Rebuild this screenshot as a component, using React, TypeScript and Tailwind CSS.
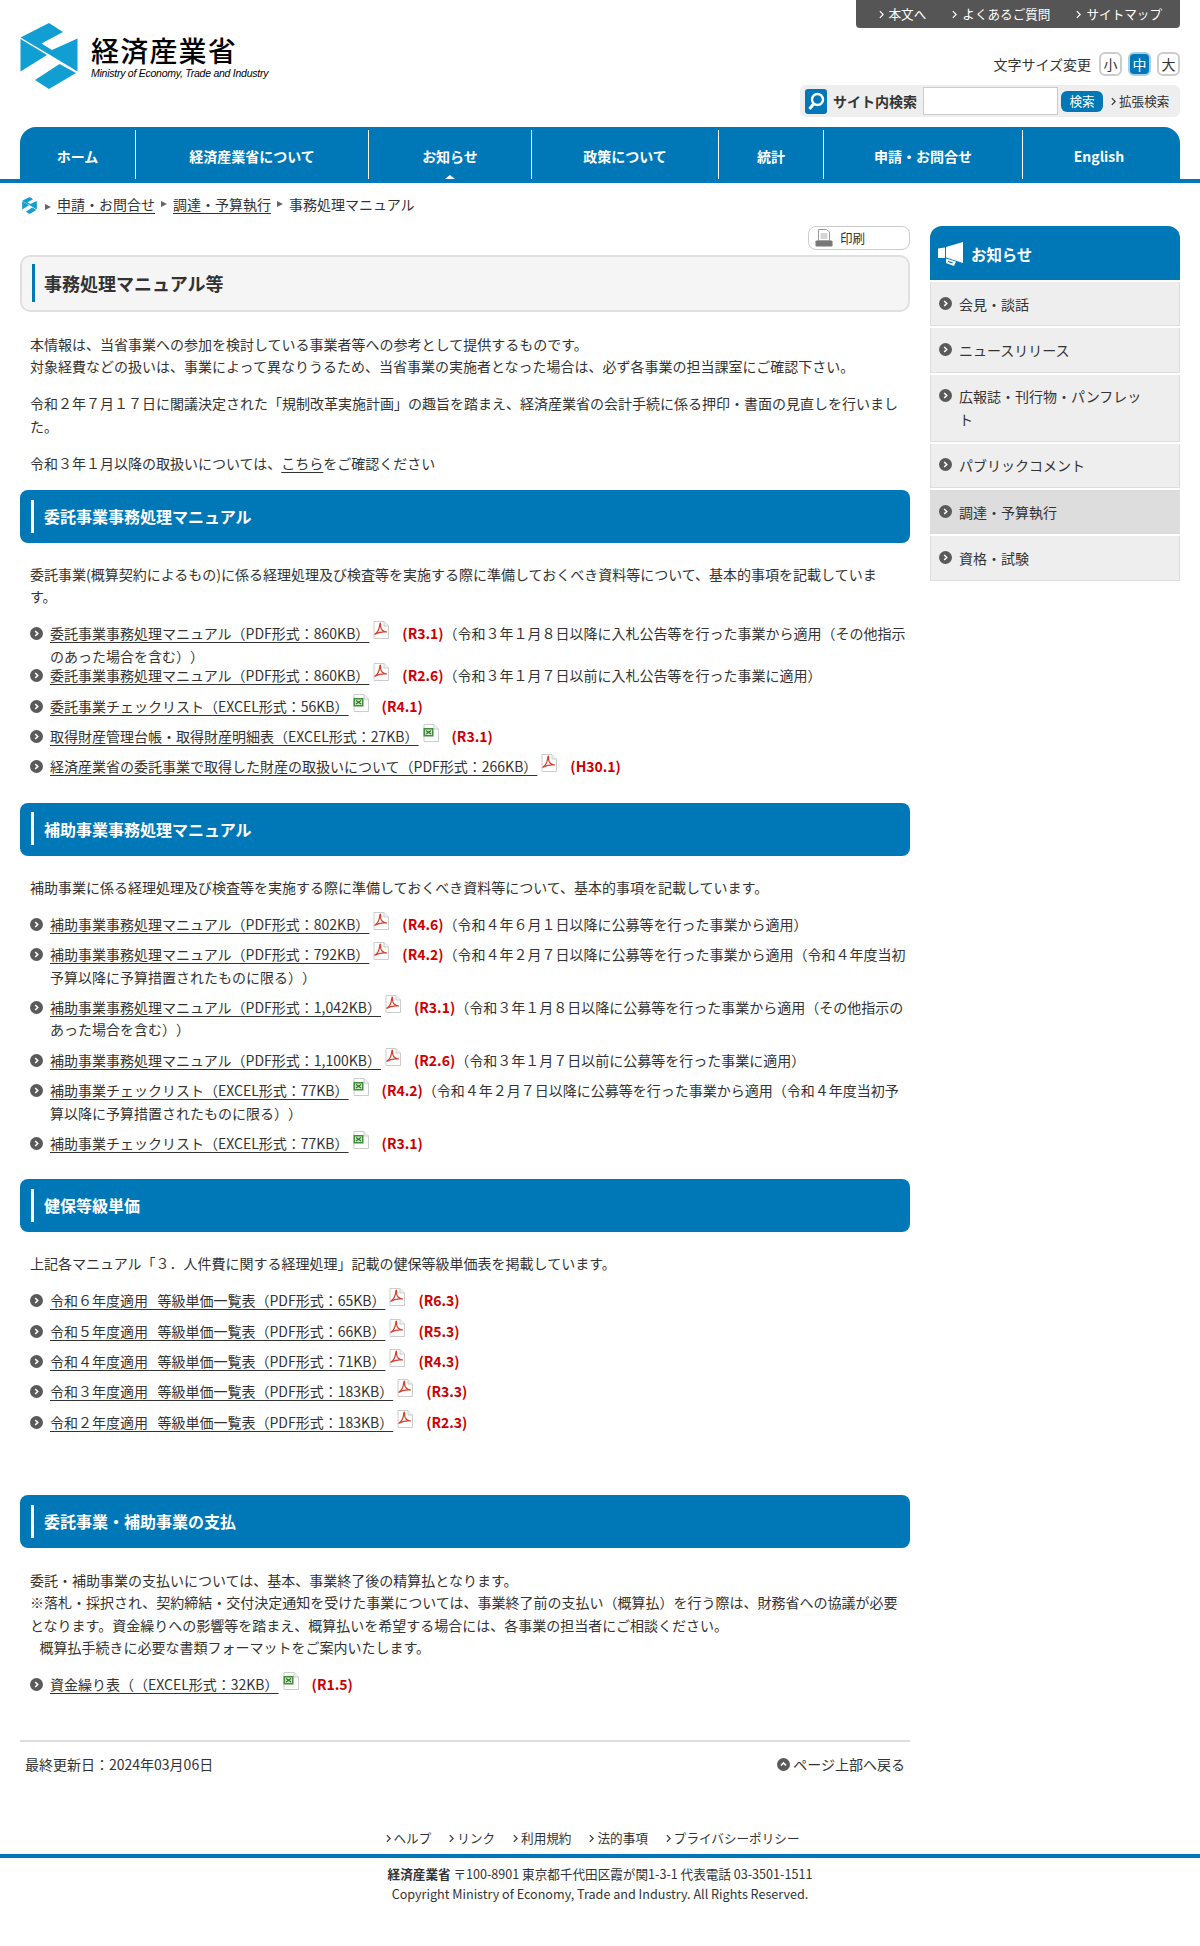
import * as React from "react";

const Bullet = ({ up = false }: { up?: boolean }) => (
    <svg viewBox="0 0 13 13" className="w-[13px] h-[13px] shrink-0">
        <circle cx="6.5" cy="6.5" r="6.5" fill="#5a5a5a" />
        {up ? (
            <path d="M4 7.5 L6.5 5 L9 7.5" fill="none" stroke="#fff" strokeWidth="1.6" />
        ) : (
            <path d="M5.2 4 L7.7 6.5 L5.2 9" fill="none" stroke="#fff" strokeWidth="1.6" />
        )}
    </svg>
);

const Chevron = ({ color = "#333" }: { color?: string }) => (
    <svg viewBox="0 0 6 10" className="w-[5px] h-[9px] shrink-0 mr-[3px]">
        <path d="M1 1 L5 5 L1 9" fill="none" stroke={color} strokeWidth="1.4" />
    </svg>
);

const Triangle = () => (
    <span className="inline-block mx-[6px] w-0 h-0 border-y-[3.5px] border-y-transparent border-l-[6px] border-l-[#666]" />
);

const Logo = ({ className }: { className: string }) => (
    <svg viewBox="0 0 57 66" className={className}>
        <g fill="#109ed3">
            <path d="M0 14.5 L28.5 0 L42.5 9 L21 20.5 L31.5 27 L57 15.5 L57 48.5 L28 31 Z" />
            <path d="M0 16 L26.5 32 L0 48.5 Z" />
            <path d="M14.5 57 L39 41 L55.5 50 L28.5 66 Z" />
        </g>
    </svg>
);

const PdfIcon = () => (
    <svg viewBox="0 0 16 18" className="inline-block w-[16px] h-[18px] align-[6px] ml-[4px] -my-[6px]">
        <path d="M1 .5 H11 L15.5 5 V17.5 H1 Z" fill="#fff" stroke="#ccc" />
        <path d="M11 .5 V5 H15.5" fill="#f1f1f1" stroke="#ccc" />
        <path d="M1.5 13.5 C4 12 6.5 8 6.8 3 C7 1.5 7.8 2 7.6 4 C7.3 8 9.5 11 14 11 C10 10.5 5 11 1.5 13.5 Z" fill="none" stroke="#d9412f" strokeWidth="1.2" />
    </svg>
);

const ExcelIcon = () => (
    <svg viewBox="0 0 16 18" className="inline-block w-[16px] h-[18px] align-[6px] ml-[4px] -my-[6px]">
        <path d="M1 .5 H11 L15.5 5 V17.5 H1 Z" fill="#fff" stroke="#ccc" />
        <path d="M11 .5 V5 H15.5" fill="#f1f1f1" stroke="#ccc" />
        <rect x="0.5" y="4" width="10" height="8.5" fill="#3f8f3a" />
        <path d="M2 5.5 H9 V11 H2 Z" fill="#cfe6c8" />
        <path d="M3 6.5 L8 10 M8 6.5 L3 10" stroke="#2f6f2b" strokeWidth="1.1" />
    </svg>
);

type Item = { label: string; type: "pdf" | "xls"; rev: string; note?: string };

const ItemRow = ({ item, className }: { item: Item; className: string }) => (
    <li className={`flex items-start gap-[7px] ${className}`}>
        <span className="mt-[5px]">
            <Bullet />
        </span>
        <div className="flex-1">
            <span className="underline underline-offset-[3px]">{item.label}</span>
            {item.type === "pdf" ? <PdfIcon /> : <ExcelIcon />}
            <span className="ml-[13px] font-bold text-[#cc0000]">({item.rev})</span>
            {item.note}
        </div>
    </li>
);

const ItemList = ({ items, tight }: { items: Item[]; tight?: boolean }) => (
    <ul className="pl-[10px] mt-[14.5px]">
        {items.map((item, index) => (
            <ItemRow key={index} item={item} className={index === 0 && tight ? "-mb-[3px]" : "mb-[8px]"} />
        ))}
    </ul>
);

const SectionHead = ({ title, className }: { title: string; className: string }) => (
    <h2 className={`flex items-center h-[53px] pl-[11px] pb-[1px] rounded-lg bg-[#0078b7] text-white text-base font-bold ${className}`}>
        <span className="w-[3px] h-[33px] bg-white mr-[10px]" />
        {title}
    </h2>
);

const itakuItems: Item[] = [
    { label: "委託事業事務処理マニュアル（PDF形式：860KB）", type: "pdf", rev: "R3.1", note: "（令和３年１月８日以降に入札公告等を行った事業から適用（その他指示のあった場合を含む））" },
    { label: "委託事業事務処理マニュアル（PDF形式：860KB）", type: "pdf", rev: "R2.6", note: "（令和３年１月７日以前に入札公告等を行った事業に適用）" },
    { label: "委託事業チェックリスト（EXCEL形式：56KB）", type: "xls", rev: "R4.1" },
    { label: "取得財産管理台帳・取得財産明細表（EXCEL形式：27KB）", type: "xls", rev: "R3.1" },
    { label: "経済産業省の委託事業で取得した財産の取扱いについて（PDF形式：266KB）", type: "pdf", rev: "H30.1" },
];

const hojoItems: Item[] = [
    { label: "補助事業事務処理マニュアル（PDF形式：802KB）", type: "pdf", rev: "R4.6", note: "（令和４年６月１日以降に公募等を行った事業から適用）" },
    { label: "補助事業事務処理マニュアル（PDF形式：792KB）", type: "pdf", rev: "R4.2", note: "（令和４年２月７日以降に公募等を行った事業から適用（令和４年度当初予算以降に予算措置されたものに限る））" },
    { label: "補助事業事務処理マニュアル（PDF形式：1,042KB）", type: "pdf", rev: "R3.1", note: "（令和３年１月８日以降に公募等を行った事業から適用（その他指示のあった場合を含む））" },
    { label: "補助事業事務処理マニュアル（PDF形式：1,100KB）", type: "pdf", rev: "R2.6", note: "（令和３年１月７日以前に公募等を行った事業に適用）" },
    { label: "補助事業チェックリスト（EXCEL形式：77KB）", type: "xls", rev: "R4.2", note: "（令和４年２月７日以降に公募等を行った事業から適用（令和４年度当初予算以降に予算措置されたものに限る））" },
    { label: "補助事業チェックリスト（EXCEL形式：77KB）", type: "xls", rev: "R3.1" },
];

const kenpoItems: Item[] = [
    { label: "令和６年度適用\u00a0\u00a0\u00a0等級単価一覧表（PDF形式：65KB）", type: "pdf", rev: "R6.3" },
    { label: "令和５年度適用\u00a0\u00a0\u00a0等級単価一覧表（PDF形式：66KB）", type: "pdf", rev: "R5.3" },
    { label: "令和４年度適用\u00a0\u00a0\u00a0等級単価一覧表（PDF形式：71KB）", type: "pdf", rev: "R4.3" },
    { label: "令和３年度適用\u00a0\u00a0\u00a0等級単価一覧表（PDF形式：183KB）", type: "pdf", rev: "R3.3" },
    { label: "令和２年度適用\u00a0\u00a0\u00a0等級単価一覧表（PDF形式：183KB）", type: "pdf", rev: "R2.3" },
];

const navItems = [
    { text: "ホーム", w: "w-[116px]" },
    { text: "経済産業省について", w: "w-[233px]" },
    { text: "お知らせ", w: "w-[163px]", current: true },
    { text: "政策について", w: "w-[187px]" },
    { text: "統計", w: "w-[105px]" },
    { text: "申請・お問合せ", w: "w-[199px]" },
    { text: "English", w: "flex-1 pr-[5px]", last: true },
];

const sideItems = [
    { text: "会見・談話" },
    { text: "ニュースリリース" },
    { text: "広報誌・刊行物・パンフレット" },
    { text: "パブリックコメント" },
    { text: "調達・予算執行", active: true },
    { text: "資格・試験" },
];

export default function App() {
    return (
        <div className="w-[1200px] h-[1946px] bg-white text-[#333] text-sm leading-[22.4px] [text-spacing-trim:space-all] font-['Noto_Sans_CJK_JP','Noto_Sans',sans-serif]">
            <header className="flex justify-between h-[127px] px-5">
                <div className="flex pt-[23px]">
                    <Logo className="w-[58px] h-[66px]" />
                    <div className="ml-[13px] pt-[11px] text-black">
                        <div className="text-[28px] leading-[32px] tracking-[1.2px] font-medium">経済産業省</div>
                        <div className="font-['Liberation_Sans',sans-serif] italic text-[10.5px] leading-[12px] tracking-[-0.25px] mt-[1px]">
                            Ministry of Economy, Trade and Industry
                        </div>
                    </div>
                </div>
                <div className="flex flex-col items-end">
                    <div className="flex items-center h-[28px] pl-[23px] pr-[18px] gap-[26px] rounded-b bg-[#555] text-white text-[12.6px]">
                        <a className="flex items-center gap-[2px]"><Chevron color="#fff" />本文へ</a>
                        <a className="flex items-center gap-[2px]"><Chevron color="#fff" />よくあるご質問</a>
                        <a className="flex items-center gap-[2px]"><Chevron color="#fff" />サイトマップ</a>
                    </div>
                    <div className="flex items-center mt-[24px] h-[24px]">
                        <span className="mr-2">文字サイズ変更</span>
                        <span className="flex items-center justify-center w-[23px] h-[24px] rounded-md border-2 border-[#ccc]">小</span>
                        <span className="flex items-center justify-center w-[23px] h-[24px] ml-[6px] rounded-md border-2 border-[#a9cfe4] bg-[#0078b7] text-white">中</span>
                        <span className="flex items-center justify-center w-[23px] h-[24px] ml-[6px] rounded-md border-2 border-[#ccc]">大</span>
                    </div>
                    <div className="flex items-center mt-[9px] w-[380px] h-[32px] pl-[5px] rounded-md bg-[#eee]">
                        <svg viewBox="0 0 22 25" className="w-[22px] h-[25px] shrink-0">
                            <rect width="22" height="25" rx="3" fill="#0078b7" />
                            <circle cx="12.5" cy="10.5" r="5.5" fill="none" stroke="#fff" strokeWidth="2.4" />
                            <path d="M8.5 15 L4.5 20" stroke="#fff" strokeWidth="3" />
                        </svg>
                        <span className="ml-[6px] font-bold">サイト内検索</span>
                        <span className="ml-[6px] w-[135px] h-[28px] bg-white border border-[#ccc]" />
                        <span className="ml-[3px] flex items-center justify-center w-[42px] h-[21px] rounded-md bg-[#0078b7] text-white text-[12.6px]">検索</span>
                        <span className="ml-2 flex items-center text-[12.6px]"><Chevron />拡張検索</span>
                    </div>
                </div>
            </header>

            <nav className="border-b-4 border-[#0078b7]">
                <ul className="flex h-[52px] mx-5 pt-[3px] rounded-t-2xl bg-[#0078b7] text-white font-bold">
                    {navItems.map((item) => (
                        <li
                            key={item.text}
                            className={`relative flex items-center justify-center pt-1 ${item.w} ${item.last ? "" : "border-r border-white"}`}
                        >
                            {item.text}
                            {item.current && (
                                <span className="absolute bottom-0 left-1/2 -translate-x-1/2 w-0 h-0 border-x-[5px] border-x-transparent border-b-[4px] border-b-white" />
                            )}
                        </li>
                    ))}
                </ul>
            </nav>

            <div className="flex items-center h-[43px] px-[22px] pb-[1px]">
                <Logo className="w-[15px] h-[17px] mt-[3px]" />
                <span className="ml-[2px]"><Triangle /></span>
                <a className="underline underline-offset-[3px]">申請・お問合せ</a>
                <Triangle />
                <a className="underline underline-offset-[3px]">調達・予算執行</a>
                <Triangle />
                <span>事務処理マニュアル</span>
            </div>

            <div className="flex gap-5 px-5">
                <main className="w-[890px]">
                    <div className="flex justify-end">
                        <a className="flex items-center w-[102px] h-[24px] pl-[6px] rounded-lg border border-[#ccc] text-[12.6px]">
                            <svg viewBox="0 0 18 18" className="w-[18px] h-[18px] mr-[7px]">
                                <path d="M3.5 .5 H11.5 L14.5 3 V12 H3.5 Z" fill="#fff" stroke="#999" />
                                <path d="M5.5 5 H12.5 M5.5 7 H12.5 M5.5 9 H12.5" stroke="#aaa" />
                                <rect x="0.5" y="11.5" width="17" height="6" rx="1" fill="#777" />
                            </svg>
                            印刷
                        </a>
                    </div>
                    <h1 className="flex items-center h-[57px] mt-[5px] pl-[10px] pb-[1px] rounded-[10px] border-2 border-[#e0e0e0] bg-[#f5f5f5] text-lg font-bold">
                        <span className="w-[3px] h-[38px] bg-[#0078b7] mr-[9px]" />
                        事務処理マニュアル等
                    </h1>

                    <div className="px-[10px] mt-[21px]">
                        <p className="mb-[14.5px]">
                            本情報は、当省事業への参加を検討している事業者等への参考として提供するものです。<br />
                            対象経費などの扱いは、事業によって異なりうるため、当省事業の実施者となった場合は、必ず各事業の担当課室にご確認下さい。
                        </p>
                        <p className="mb-[14.5px]">
                            令和２年７月１７日に閣議決定された「規制改革実施計画」の趣旨を踏まえ、経済産業省の会計手続に係る押印・書面の見直しを行いました。
                        </p>
                        <p>
                            令和３年１月以降の取扱いについては、<a className="underline underline-offset-[3px]">こちら</a>をご確認ください
                        </p>
                    </div>

                    <SectionHead title="委託事業事務処理マニュアル" className="mt-[16px]" />
                    <p className="px-[10px] mt-[20px]">
                        委託事業(概算契約によるもの)に係る経理処理及び検査等を実施する際に準備しておくべき資料等について、基本的事項を記載しています。
                    </p>
                    <ItemList items={itakuItems} tight />

                    <SectionHead title="補助事業事務処理マニュアル" className="mt-[25px]" />
                    <p className="px-[10px] mt-[20px]">
                        補助事業に係る経理処理及び検査等を実施する際に準備しておくべき資料等について、基本的事項を記載しています。
                    </p>
                    <ItemList items={hojoItems} />

                    <SectionHead title="健保等級単価" className="mt-[25px]" />
                    <p className="px-[10px] mt-[20px]">
                        上記各マニュアル「３．人件費に関する経理処理」記載の健保等級単価表を掲載しています。
                    </p>
                    <ItemList items={kenpoItems} />

                    <SectionHead title="委託事業・補助事業の支払" className="mt-[62px]" />
                    <p className="px-[10px] mt-[20.5px]">
                        委託・補助事業の支払いについては、基本、事業終了後の精算払となります。<br />
                        ※落札・採択され、契約締結・交付決定通知を受けた事業については、事業終了前の支払い（概算払）を行う際は、財務省への協議が必要となります。資金繰りへの影響等を踏まえ、概算払いを希望する場合には、各事業の担当者にご相談ください。<br />
                        &nbsp;&nbsp;&nbsp;概算払手続きに必要な書類フォーマットをご案内いたします。
                    </p>
                    <ItemList items={[{ label: "資金繰り表（（EXCEL形式：32KB）", type: "xls", rev: "R1.5" }]} />

                    <div className="flex justify-between items-center h-[46px] mt-[45px] px-[5px] border-t-2 border-[#ddd]">
                        <span>最終更新日：2024年03月06日</span>
                        <a className="flex items-center gap-[3px]"><Bullet up />ページ上部へ戻る</a>
                    </div>
                </main>

                <aside className="w-[250px]">
                    <div className="flex items-center h-[54px] pl-[8px] pt-[2px] rounded-t-xl bg-[#0078b7] text-white text-[15.4px] font-bold">
                        <svg viewBox="0 0 25 24" className="w-[25px] h-[24px] mr-[8px]">
                            <path d="M0 6.5 L7 5.5 L7 16 L0 16 Z M8 5 L25 0 L25 21 L8 15.5 Z" fill="#fff" />
                            <path d="M8 16.5 L18 19.5 L16 24 L8 21 Z M10 18.8 L10 20 L14.5 21.6 L15 20.4 Z" fill="#fff" fillRule="evenodd" />
                        </svg>
                        お知らせ
                    </div>
                    {sideItems.map((item) => (
                        <div
                            key={item.text}
                            className={`flex items-start mt-[2px] pl-[8px] py-[10.5px] leading-[22.4px] border-x border-b border-[#ddd] ${item.active ? "bg-[#ddd]" : "bg-[#eee]"}`}
                        >
                            <span className="mt-[4px] mr-[7px]"><Bullet /></span>
                            <span className="w-[190px]">{item.text}</span>
                        </div>
                    ))}
                </aside>
            </div>

            <div className="flex justify-center gap-[18px] mt-[42px] pr-[15px] text-[12.6px] leading-[20px]">
                {["ヘルプ", "リンク", "利用規約", "法的事項", "プライバシーポリシー"].map((text) => (
                    <a key={text} className="flex items-center"><Chevron />{text}</a>
                ))}
            </div>
            <footer className="mt-[6px] pt-[6px] border-t-4 border-[#0078b7] text-center text-[12.6px] leading-[20px]">
                <div><b>経済産業省</b> 〒100-8901 東京都千代田区霞が関1-3-1 代表電話 03-3501-1511</div>
                <div>Copyright Ministry of Economy, Trade and Industry. All Rights Reserved.</div>
            </footer>
        </div>
    );
}
